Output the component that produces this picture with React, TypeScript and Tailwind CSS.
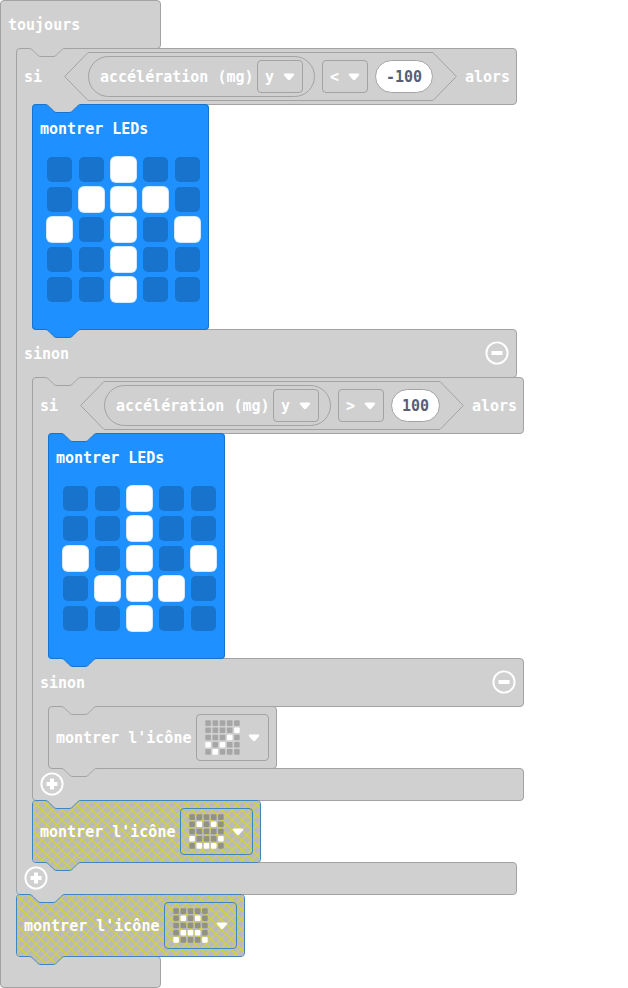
import React, { useId } from "react";

type Tone = "gray" | "blue" | "hatch";

const FILL: Record<Tone, string> = { gray: "#d0d0d0", blue: "#1e90ff", hatch: "#bababa" };
const STROKE: Record<Tone, string> = { gray: "#a3a3a3", blue: "#1873cc", hatch: "#3f86bf" };

const CURVE = "c2 0 3 1 4 2l4 4c1 1 2 2 4 2h12c2 0 3 -1 4 -2l4 -4c1 -1 2 -2 4 -2";

function HatchPattern({ id, x = 0, y = 0 }: { id: string; x?: number; y?: number }) {
  return (
    <pattern id={id} x={x} y={y} width="10" height="10" patternUnits="userSpaceOnUse">
      <rect width="10" height="10" fill="#bababa" />
      <path d="M-1 -1L11 11M11 -1L-1 11" stroke="#d6d62c" strokeWidth="1.1" />
    </pattern>
  );
}

/* Connector between two stacked pieces: takes the colour of the piece above. */
function Notch({ above, edge, nested = false }: { above: Tone; edge: Tone; nested?: boolean }) {
  const id = useId();
  return (
    <svg
      className={`absolute -top-px z-30 ${nested ? "left-7" : "left-3"}`}
      width="36"
      height="10"
      viewBox="0 0 36 10"
      aria-hidden="true"
    >
      {above === "hatch" && (
        <defs>
          <HatchPattern id={id} x={7} y={8} />
        </defs>
      )}
      <path d={`M0 0V.5${CURVE}V0Z`} fill={above === "hatch" ? `url(#${id})` : FILL[above]} />
      <path d={`M0 .5${CURVE}`} fill="none" stroke={STROKE[edge]} />
    </svg>
  );
}

function Caret() {
  return (
    <svg className="pointer-events-none shrink-0" width="12" height="8" viewBox="0 0 12 8" aria-hidden="true">
      <path d="M2.2 .4h7.6c1.5 0 1.9 1.3 1 2.2L7.3 6.5c-.8.9-1.8.9-2.6 0L1.2 2.6C.3 1.7.7.4 2.2.4Z" fill="#fff" />
    </svg>
  );
}

function Drop({ label, options }: { label: string; options: string[] }) {
  return (
    <div className="relative h-[33px] w-[46px] shrink-0">
      <select
        aria-label={label}
        className="h-full w-full appearance-none rounded border border-[#a3a3a3] bg-transparent pl-[7px] font-bold text-white outline-none"
      >
        {options.map((o) => (
          <option key={o}>{o}</option>
        ))}
      </select>
      <div className="pointer-events-none absolute inset-y-0 right-2 flex items-center">
        <Caret />
      </div>
    </div>
  );
}

function RoundButton({ kind, label }: { kind: "plus" | "minus"; label: string }) {
  return (
    <button type="button" aria-label={label} className="relative z-40 mb-0.5 size-6 shrink-0">
      <svg width="24" height="24" viewBox="0 0 24 24" fill="none" stroke="#fff" aria-hidden="true">
        <circle cx="12" cy="12" r="10.6" strokeWidth="1.9" />
        <path d="M6.5 12h11" strokeWidth="4" strokeLinejoin="round" />
        {kind === "plus" && <path d="M12 6.5v11" strokeWidth="4" />}
      </svg>
    </button>
  );
}

function Condition({ op, value, wide }: { op: string; value: string; wide: boolean }) {
  return (
    <div className="flex h-[49px] shrink-0">
      <svg width="24" height="49" viewBox="0 0 24 49" fill="none" stroke="#a3a3a3" aria-hidden="true">
        <path d="M24 .5L.7 24.5L24 48.5" />
      </svg>
      <div className="flex items-center gap-[7px] border-y border-[#a3a3a3]">
        <div className="flex h-[41px] w-[227px] items-center justify-between rounded-full border border-[#a3a3a3] px-[11px]">
          <span>accélération (mg)</span>
          <Drop label="axe" options={["y", "x", "z"]} />
        </div>
        <Drop label="comparaison" options={[op, "=", "≠"]} />
        <input
          aria-label="valeur"
          defaultValue={value}
          className={`h-[33px] rounded-full border border-[#a3a3a3] bg-white text-center font-bold text-[#575e75] outline-none ${wide ? "w-[58px]" : "w-[49px]"}`}
        />
      </div>
      <svg width="24" height="49" viewBox="0 0 24 49" fill="none" stroke="#a3a3a3" aria-hidden="true">
        <path d="M0 .5L23.3 24.5L0 48.5" />
      </svg>
    </div>
  );
}

const bar = "relative -mb-px flex items-center border border-[#a3a3a3] bg-[#d0d0d0] rounded-r";

function Body({ children }: { children: React.ReactNode }) {
  return (
    <div className="flex">
      <div className="relative z-10 -mr-1 -mb-px w-5 shrink-0 border-l border-[#a3a3a3] bg-[#d0d0d0]" />
      <div className="relative z-20 flex flex-col items-start">{children}</div>
    </div>
  );
}

function IfElse(props: {
  op: string;
  value: string;
  wide: boolean;
  tail: Tone;
  then: React.ReactNode;
  otherwise: React.ReactNode;
}) {
  const width = props.wide ? "w-[501px]" : "w-[492px]";
  return (
    <div>
      <div className={`${bar} ${width} h-[57px] rounded-tl pl-[7px]`}>
        <Notch above="gray" edge="gray" />
        <span className="w-10 shrink-0">si</span>
        <Condition op={props.op} value={props.value} wide={props.wide} />
        <span className="ml-2">alors</span>
      </div>
      <Body>{props.then}</Body>
      <div className={`${bar} ${width} h-[49px] justify-between px-[7px]`}>
        <Notch above="blue" edge="blue" nested />
        <span>sinon</span>
        <RoundButton kind="minus" label="Retirer sinon" />
      </div>
      <Body>{props.otherwise}</Body>
      <div className={`${bar} ${width} h-[33px] rounded-bl px-[7px]`}>
        <Notch above={props.tail} edge={props.tail} nested />
        <RoundButton kind="plus" label="Ajouter une condition" />
      </div>
    </div>
  );
}

function Leds({ rows }: { rows: string[] }) {
  return (
    <fieldset className="relative -mb-px h-[226px] w-[177px] rounded border border-[#1873cc] bg-[#1e90ff]">
      <Notch above="gray" edge="blue" />
      <div className="flex h-12 items-center pl-[7px]">montrer LEDs</div>
      <div className="mt-1 grid w-fit grid-cols-5 gap-x-[7px] gap-y-[5px] pl-[14px]">
        {rows.flatMap((row, y) =>
          row.split("").map((c, x) => (
            <input
              key={`${x}-${y}`}
              type="checkbox"
              defaultChecked={c === "#"}
              aria-label={`LED ${x + 1}, ${y + 1}`}
              className="block size-[25px] appearance-none rounded-[5px] bg-[#1873cc] checked:bg-white checked:ring-1 checked:ring-[#d2e9ff]"
            />
          ))
        )}
      </div>
    </fieldset>
  );
}

function IconGrid({ rows, off }: { rows: string[]; off: string }) {
  return (
    <svg width="36" height="36" viewBox="0 0 36 36" aria-hidden="true">
      {rows.flatMap((row, y) =>
        row.split("").map((c, x) => (
          <rect
            key={`${x}-${y}`}
            x={0.3 + x * 7.2}
            y={0.3 + y * 7.2}
            width="5.6"
            height="5.6"
            rx="1"
            fill={c === "#" ? "#fff" : off}
          />
        ))
      )}
    </svg>
  );
}

function ShowIcon({ rows, above, disabled = false }: { rows: string[]; above: Tone; disabled?: boolean }) {
  const id = useId();
  const edge = disabled ? "border-[#3f86bf]" : "border-[#a3a3a3]";
  return (
    <div
      className={`relative -mb-px flex h-[63px] w-[229px] items-center justify-between rounded border bg-[#d0d0d0] px-[7px] ${edge}`}
    >
      {disabled && (
        <svg className="absolute inset-0 h-full w-full rounded-[3px]" aria-hidden="true">
          <defs>
            <HatchPattern id={id} x={-1} y={-1} />
          </defs>
          <rect width="100%" height="100%" fill={`url(#${id})`} />
        </svg>
      )}
      <Notch above={above} edge={disabled ? "hatch" : "gray"} />
      <span className="relative">montrer l'icône</span>
      <button
        type="button"
        aria-label="Choisir une icône"
        className={`relative flex h-[47px] w-[73px] items-center justify-between rounded border pr-2 pl-2 ${edge}`}
      >
        <IconGrid rows={rows} off={disabled ? "rgba(136,136,130,0.85)" : "#a6a6a6"} />
        <Caret />
      </button>
    </div>
  );
}

export default function App() {
  return (
    <main className="min-h-screen overflow-hidden bg-white font-['DejaVu_Sans_Mono',monospace] text-[15px] leading-5 font-bold whitespace-nowrap text-white">
      <div className={`${bar} h-[49px] w-[161px] rounded-tl pl-[7px]`}>toujours</div>
      <Body>
        <IfElse
          op="<"
          value="-100"
          wide
          tail="hatch"
          then={<Leds rows={["..#..", ".###.", "#.#.#", "..#..", "..#.."]} />}
          otherwise={
            <>
              <IfElse
                op=">"
                value="100"
                wide={false}
                tail="gray"
                then={<Leds rows={["..#..", "..#..", "#.#.#", ".###.", "..#.."]} />}
                otherwise={<ShowIcon above="gray" rows={[".....", "....#", "...#.", "#.#..", ".#..."]} />}
              />
              <ShowIcon above="gray" disabled rows={[".....", ".#.#.", ".....", "#...#", ".###."]} />
            </>
          }
        />
        <ShowIcon above="gray" disabled rows={[".....", ".#.#.", ".....", ".###.", "#...#"]} />
      </Body>
      <div className={`${bar} h-8 w-[161px] rounded-bl`}>
        <Notch above="hatch" edge="hatch" nested />
      </div>
    </main>
  );
}
